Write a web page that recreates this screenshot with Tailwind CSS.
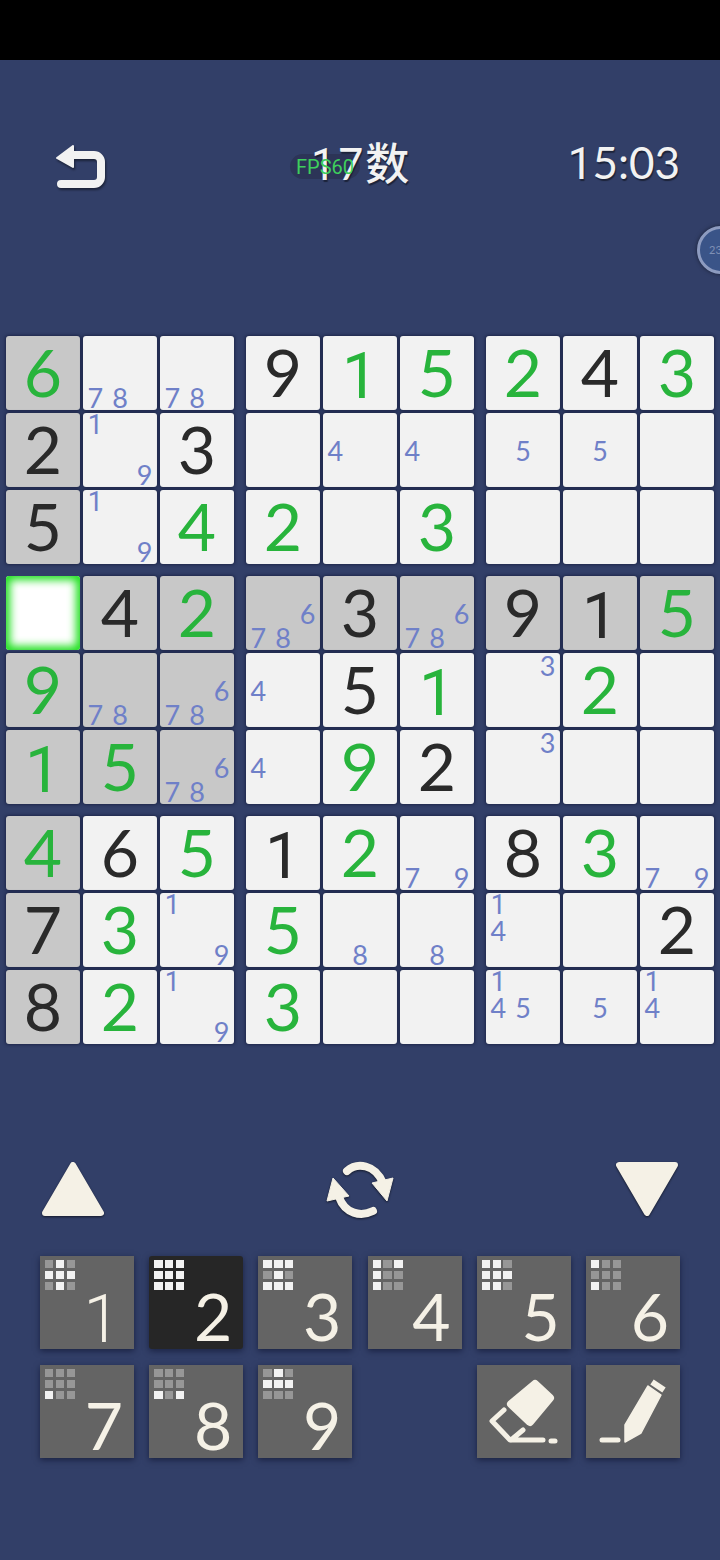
<!DOCTYPE html>
<html lang="en">
<head>
  <meta charset="UTF-8" />
  <title>17数</title>
  <script src="https://cdn.jsdelivr.net/npm/@tailwindcss/browser@4"></script>
</head>
<body class="bg-[#323f68]">
<div class="relative w-[720px] h-[1560px] overflow-hidden flex flex-col bg-[#323f68] font-['Lato','Noto_Sans_CJK_SC',sans-serif]">

  <div class="h-[60px] bg-black"></div>

  <!-- FPS pill sits under the title, its label over it -->
  <div class="absolute z-0 left-[290px] top-[154px] w-[70px] h-[25px] rounded-full bg-[#2a3252]/80"></div>

  <!-- Header -->
  <div class="relative z-10 mt-[85px] h-[43px] flex items-center text-[#f2f2f2]">
    <svg class="ml-[56px] w-[50px] h-[44px] drop-shadow-[1px_2px_1px_rgba(0,0,0,0.45)]" viewBox="0 0 50 44">
      <path d="M1 13 L17 1 V22 Z" fill="#f2f2f2" stroke="#f2f2f2" stroke-width="2" stroke-linejoin="round"/>
      <path d="M14 10 H38 a7 7 0 0 1 7 7 V32 a7 7 0 0 1 -7 7 H5" fill="none" stroke="#f2f2f2" stroke-width="8" stroke-linecap="round"/>
    </svg>
    <div class="ml-[205px] mb-[6px] text-[44px] leading-none tracking-[2px] [text-shadow:1px_2px_1px_rgba(0,0,0,0.45)]"><span class="font-['Roboto',sans-serif]">1</span><span>7</span><span class="font-medium">数</span></div>
    <div class="ml-auto mr-[40px] mb-[8px] text-[44px] leading-none [text-shadow:1px_2px_1px_rgba(0,0,0,0.45)]"><span class="font-['Roboto',sans-serif]">1</span>5:03</div>
  </div>

  <div class="absolute z-20 left-[290px] top-[154px] w-[70px] h-[25px] flex items-center justify-center text-[20px] leading-none text-[#3ecf5c] font-['Roboto',sans-serif]">FPS60</div>
  <div class="absolute left-[697px] top-[226px] w-[48px] h-[48px] rounded-full border-[3px] border-[#8d9bc0] bg-[#3a5488] flex items-center pl-[9px] text-[11px] text-[#7f90b5] shadow-[0_0_4px_rgba(0,0,0,0.5)]">23</div>

  <!-- Board -->
  <div id="board" class="mt-[148px] ml-[6px] w-[708px] grid grid-cols-3 gap-[12px]"></div>

  <!-- Tool row -->
  <div class="mt-[116px] h-[60px] flex items-center">
    <svg class="ml-[40px] mb-[2px] w-[66px] h-[58px] drop-shadow-[0_1px_1px_rgba(0,0,0,0.6)]" viewBox="0 0 66 58">
      <polygon points="33,5 61,53 5,53" fill="#f5f1e6" stroke="#f5f1e6" stroke-width="6" stroke-linejoin="round"/>
    </svg>
    <svg class="ml-[219px] w-[70px] h-[62px] drop-shadow-[0_1px_1px_rgba(0,0,0,0.6)]" viewBox="0 0 70 62">
      <path d="M22 12 C32 3 50 5 58 24" fill="none" stroke="#f5f1e6" stroke-width="8" stroke-linecap="round"/>
      <polygon points="47,24 68,19 62,42" fill="#f5f1e6" stroke="#f5f1e6" stroke-width="1" stroke-linejoin="round"/>
      <path d="M48 52 C36 58 20 55 14 38" fill="none" stroke="#f5f1e6" stroke-width="8" stroke-linecap="round"/>
      <polygon points="2,42 8,19 24,37" fill="#f5f1e6" stroke="#f5f1e6" stroke-width="1" stroke-linejoin="round"/>
    </svg>
    <svg class="ml-[219px] mb-[2px] w-[66px] h-[58px] drop-shadow-[0_1px_1px_rgba(0,0,0,0.6)]" viewBox="0 0 66 58">
      <polygon points="5,5 61,5 33,53" fill="#f5f1e6" stroke="#f5f1e6" stroke-width="6" stroke-linejoin="round"/>
    </svg>
  </div>

  <!-- Number pad -->
  <div id="pad" class="mt-[36px] ml-[40px] w-[640px] grid grid-cols-6 gap-x-[15.2px] gap-y-[16px]"></div>
</div>

<script>
  // cell: digit + colour (k/g), * = shaded, n + digits = pencil notes
  const rows = [
    ['6g*','n78','n78','9k','1g','5g','2g','4k','3g'],
    ['2k*','n19','3k','','n4','n4','n5','n5',''],
    ['5k*','n19','4g','2g','','3g','','',''],
    ['sel','4k*','2g*','n678*','3k*','n678*','9k*','1k*','5g*'],
    ['9g*','n78*','n678*','n4','5k','1g','n3','2g',''],
    ['1g*','5g*','n678*','n4','9g','2k','n3','',''],
    ['4g*','6k','5g','1k','2g','n79','8k','3g','n79'],
    ['7k*','3g','n19','5g','n8','n8','n14','','2k'],
    ['8k*','2g','n19','3g','','','n145','n5','n14'],
  ];

  const cellBase = 'h-[74px] rounded-[3px]';
  const cellShadow = 'shadow-[0_0_3px_1px_rgba(15,20,50,0.55)]';

  // the digit 1 has no foot in the reference, Roboto's is closest
  const oneFont = d => d === '1' ? "font-['Roboto',sans-serif]" : '';

  function cellHtml(c) {
    const bg = c.endsWith('*') ? 'bg-[#c8c8c8]' : 'bg-[#f2f2f2]';
    if (c === 'sel') return `<div class="${cellBase} bg-white shadow-[inset_0_0_8px_4px_#1ee01e]"></div>`;
    if (c.startsWith('n')) {
      let notes = '';
      for (let i = 1; i <= 9; i++) {
        const on = c.includes(String(i));
        notes += `<span class="${on ? '' : 'invisible'} ${oneFont(String(i))} flex items-center justify-center text-[27px] leading-none text-[#6f80c8]">${i}</span>`;
      }
      return `<div class="${cellBase} ${cellShadow} ${bg} grid grid-cols-3 grid-rows-3">${notes}</div>`;
    }
    if (!c) return `<div class="${cellBase} ${cellShadow} ${bg}"></div>`;
    const color = c[1] === 'g' ? 'text-[#28b43c]' : 'text-[#2a2a2a]';
    const size = c[0] === '1' ? 'pt-[7px] text-[64px]' : 'pb-[3px] text-[66px]';
    return `<div class="${cellBase} ${cellShadow} ${bg} ${oneFont(c[0])} ${size} flex items-center justify-center leading-none ${color}">${c[0]}</div>`;
  }

  let boardHtml = '';
  for (let b = 0; b < 9; b++) {
    const r0 = Math.floor(b / 3) * 3, c0 = (b % 3) * 3;
    let box = '';
    for (let r = r0; r < r0 + 3; r++)
      for (let c = c0; c < c0 + 3; c++) box += cellHtml(rows[r][c]);
    boardHtml += `<div class="grid grid-cols-3 gap-[3px]">${box}</div>`;
  }
  document.getElementById('board').innerHTML = boardHtml;

  // remaining-digit minimaps, w = white square
  const maps = {
    1:'.w.www.w.', 2:'wwwwwwwww', 3:'www.w.www', 4:'w.ww..w..', 5:'ww.wwwww.',
    6:'w.....w..', 7:'......w..', 8:'......w.w', 9:'.w.www...',
  };

  const padShadow = 'shadow-[0_2px_6px_rgba(10,15,40,0.6)]';

  function padButton(n) {
    let mini = '';
    for (const ch of maps[n])
      mini += `<span class="w-[8.4px] h-[8.4px] ${ch === 'w' ? 'bg-[#f2f2f2]' : 'bg-[#979797]'}"></span>`;
    const bg = n === 2 ? 'bg-[#262626] rounded-[3px]' : 'bg-[#646464]';
    const place = n === 1 ? 'right-[14px] bottom-[-4px] font-light' : 'right-[11px] bottom-[0px]';
    return `<div class="relative h-[93px] ${bg} ${padShadow}">
      <div class="ml-[5px] pt-[4px] w-[30px] grid grid-cols-3 gap-[2.4px]">${mini}</div>
      <div class="absolute ${place} ${oneFont(String(n))} text-[66px] leading-none text-[#f5f1e6]">${n}</div>
    </div>`;
  }

  const eraser = `<div class="h-[93px] bg-[#646464] ${padShadow}">
    <svg viewBox="0 0 94 93" class="w-[94px] h-[93px]">
      <path d="M58 19 L73 33 L53 57 L34 39 Z" fill="#f5f1e6" stroke="#f5f1e6" stroke-width="8" stroke-linejoin="round"/>
      <path d="M27 45 L15 56 L33 75 H66 M46 65 L34 75" fill="none" stroke="#f5f1e6" stroke-width="5" stroke-linecap="round" stroke-linejoin="round"/>
      <path d="M74 76 H78" stroke="#f5f1e6" stroke-width="5" stroke-linecap="round"/>
    </svg>
  </div>`;
  const pencil = `<div class="h-[93px] bg-[#646464] ${padShadow}">
    <svg viewBox="0 0 94 93" class="w-[94px] h-[93px]">
      <path d="M39 77 V60 L62 21 L75 30 L55 68 Z" fill="#f5f1e6" stroke="#f5f1e6" stroke-width="1.5" stroke-linejoin="round"/>
      <path d="M66 17 L78 25" stroke="#f5f1e6" stroke-width="6"/>
      <path d="M16 75 H32" stroke="#f5f1e6" stroke-width="5" stroke-linecap="round"/>
    </svg>
  </div>`;

  let padHtml = '';
  for (let n = 1; n <= 9; n++) padHtml += padButton(n);
  padHtml += '<div></div>' + eraser + pencil;
  document.getElementById('pad').innerHTML = padHtml;
</script>
</body>
</html>
